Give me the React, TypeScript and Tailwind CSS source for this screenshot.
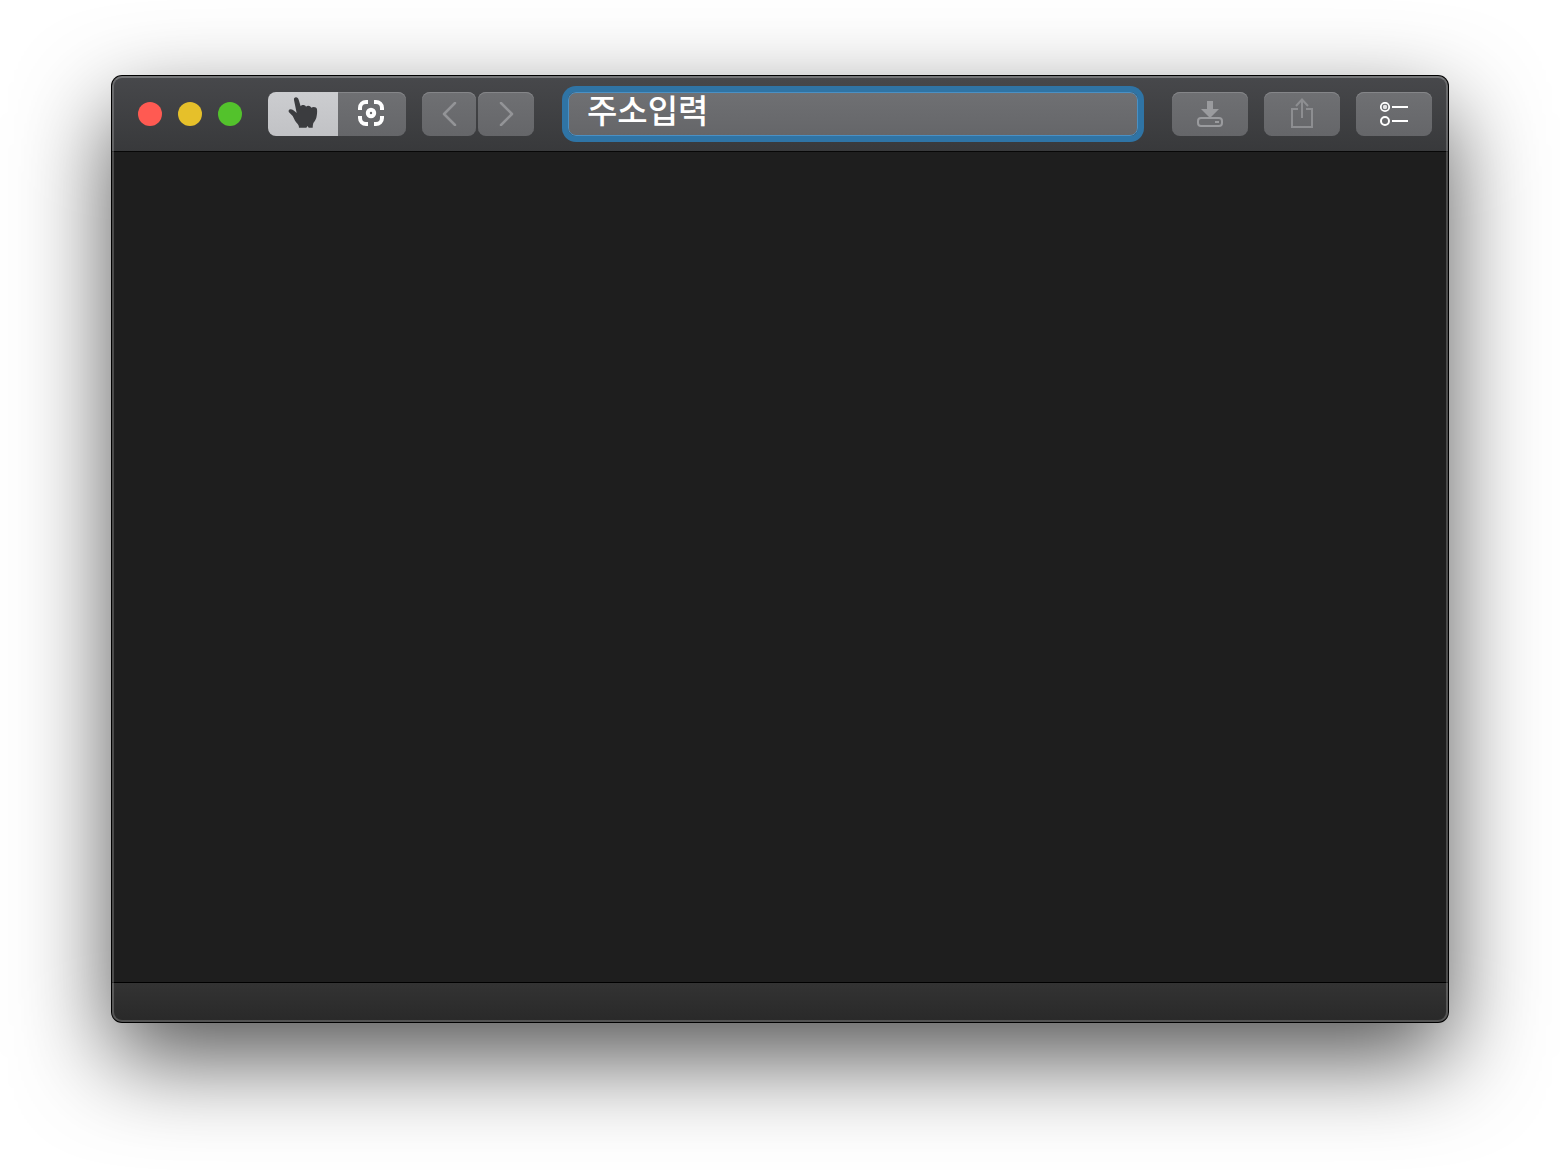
import type { ReactNode } from 'react'

const LIGHTS = [
  { name: '닫기', color: 'bg-[#ff5a52]' },
  { name: '최소화', color: 'bg-[#e6c02a]' },
  { name: '확대', color: 'bg-[#53c22c]' },
]

const FACE = 'bg-linear-to-b from-[#6f7073] to-[#656669] shadow-[inset_0_1px_0_#858689]'

function PointerIcon() {
  return (
    <svg className="h-8 w-[30px]" viewBox="0 0 90 96" fill="#3b3c3f" aria-hidden="true">
      <path d="M18 9C17 4 20 1 24 1c4 0 7 3 8 7l6 20c3-5 13-5 16 1 4-5 13-4 16 3 5-4 16-3 17 5 1 8 0 17-2 25-2 7-6 11-9 16-1 4-2 9-2 14H62l-3-5-4 5H33c0-5-2-8-4-11-7-6-10-15-15-24L3 46c-3-4 0-9 4-9 7 0 14 6 19 11z" />
    </svg>
  )
}

function TargetIcon() {
  return (
    <svg className="size-[26px]" viewBox="0 0 26 26" fill="none" stroke="#fff" strokeWidth="4" aria-hidden="true">
      <path d="M2 10V8a6 6 0 0 1 6-6h2M16 2h2a6 6 0 0 1 6 6v2M24 16v2a6 6 0 0 1-6 6h-2M10 24H8a6 6 0 0 1-6-6v-2" />
      <circle cx="13" cy="13" r="3.2" />
    </svg>
  )
}

function ChevronIcon({ d }: { d: string }) {
  return (
    <svg className="h-6 w-4" viewBox="0 0 16 24" fill="none" stroke="#939497" strokeWidth="2.5" strokeLinecap="round" strokeLinejoin="round" aria-hidden="true">
      <path d={d} />
    </svg>
  )
}

function DownloadIcon() {
  return (
    <svg className="h-[26px] w-[26px]" viewBox="0 0 26 26" fill="none" aria-hidden="true">
      <path d="M10 0h6v8h6l-9 9-9-9h6z" fill="#9a9b9e" />
      <rect x="1" y="17" width="24" height="8" rx="3" fill="#6a6b6e" stroke="#9a9b9e" strokeWidth="2" />
      <path d="M18 21h4" stroke="#9a9b9e" strokeWidth="2" />
    </svg>
  )
}

function ShareIcon() {
  return (
    <svg className="h-8 w-[22px]" viewBox="0 0 22 32" fill="none" stroke="#8d8e91" strokeWidth="2" aria-hidden="true">
      <path d="M7 11H1v18h20V11h-6M11 20V2M5 8l6-6.5L17 8" />
    </svg>
  )
}

function ListIcon() {
  return (
    <svg className="h-6 w-7" viewBox="0 0 28 24" fill="none" stroke="#fff" strokeWidth="2" aria-hidden="true">
      <circle cx="5" cy="5" r="4.2" strokeWidth="1.8" />
      <circle cx="5" cy="5" r="2.2" fill="#e4e4e5" stroke="none" />
      <circle cx="5" cy="19" r="4" />
      <path d="M12 5h16M12 19h16" />
    </svg>
  )
}

function ToolButton({ label, children }: { label: string; children: ReactNode }) {
  return (
    <button type="button" aria-label={label} className={`flex h-11 w-[76px] items-center justify-center rounded-lg ${FACE}`}>
      {children}
    </button>
  )
}

export default function App() {
  return (
    <main className="flex min-h-screen bg-white px-28 pt-[76px] pb-[148px] font-['Liberation_Sans','Noto_Sans_CJK_KR',sans-serif]">
      <div className="relative flex min-w-0 flex-1 flex-col rounded-[10px] bg-[#1e1e1e] shadow-[0_0_0_1px_#000,0_36px_94px_rgba(0,0,0,0.68)]">
        <header className="flex h-19 shrink-0 items-center rounded-t-[10px] bg-linear-to-b from-[#47484b] to-[#38393b] pr-4 pl-[26px] shadow-[inset_0_-1px_0_#070707]">
          <div className="flex gap-4">
            {LIGHTS.map(l => (
              <button key={l.name} type="button" aria-label={l.name} className={`size-6 rounded-full ${l.color}`} />
            ))}
          </div>

          <div className="ml-[26px] flex">
            <button type="button" aria-label="선택" aria-pressed="true"
              className="flex h-11 w-[70px] items-center justify-center rounded-l-lg bg-linear-to-b from-[#cccdd0] to-[#c1c2c5] pb-0.5">
              <PointerIcon />
            </button>
            <button type="button" aria-label="대상 지정" aria-pressed="false"
              className={`flex h-11 w-[68px] items-center justify-center rounded-r-lg pr-0.5 pb-0.5 ${FACE}`}>
              <TargetIcon />
            </button>
          </div>

          <nav className="ml-4 flex gap-0.5">
            <button type="button" aria-label="뒤로" className={`flex h-11 w-[54px] items-center justify-center rounded-lg ${FACE}`}>
              <ChevronIcon d="M14 1 3 12l11 11" />
            </button>
            <button type="button" aria-label="앞으로" className={`flex h-11 w-14 items-center justify-center rounded-lg ${FACE}`}>
              <ChevronIcon d="m3 1 11 11L3 23" />
            </button>
          </nav>

          {/* Address field, drawn with its focus ring */}
          <input
            type="text"
            aria-label="주소"
            defaultValue="주소입력"
            className="mx-[34px] h-11 min-w-0 flex-1 rounded-lg border border-[#4a90c4] bg-linear-to-b from-[#6f7073] to-[#656669] px-[18px] pb-2.5 text-[33px] leading-8 font-medium text-white shadow-[0_0_0_6px_#2f74a5] outline-none"
          />

          <div className="flex gap-4">
            <ToolButton label="다운로드"><DownloadIcon /></ToolButton>
            <ToolButton label="공유"><ShareIcon /></ToolButton>
            <ToolButton label="목록"><ListIcon /></ToolButton>
          </div>
        </header>

        <section className="flex-1" />

        <footer className="h-10 shrink-0 rounded-b-[10px] border-t border-black bg-linear-to-b from-[#333333] to-[#292929]" />

        {/* Light rim over the window edge */}
        <div className="pointer-events-none absolute inset-0 rounded-[10px] border-2 border-white/20 border-t-white/25" />
      </div>
    </main>
  )
}
